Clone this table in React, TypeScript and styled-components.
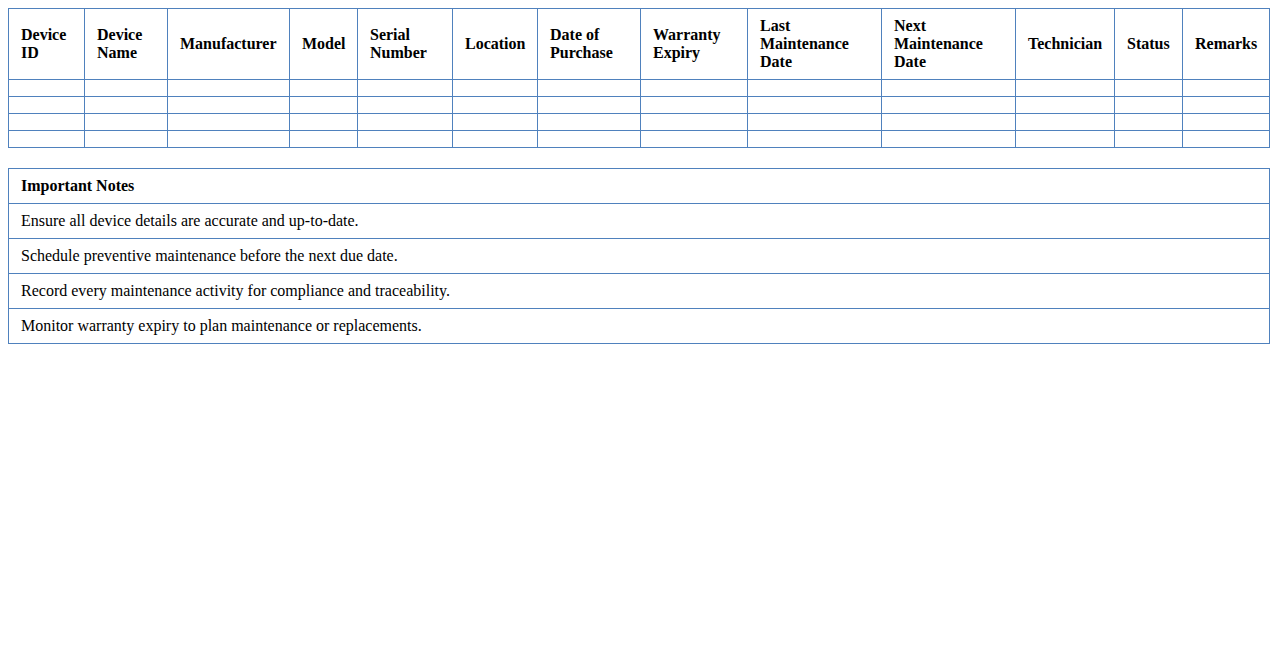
import React from "react";
import styled, { createGlobalStyle } from "styled-components";

const GlobalStyle = createGlobalStyle`
  body {
    margin: 8px;
    font-family: "Liberation Serif", "Times New Roman", serif;
    font-size: 16px;
    color: #000;
    background: #fff;
  }
`;

const Table = styled.table<{ $gap?: number; $fixed?: boolean }>`
  width: 100%;
  border-collapse: collapse;
  table-layout: ${(p) => (p.$fixed ? "fixed" : "auto")};
  margin-bottom: ${(p) => p.$gap ?? 0}px;
`;

const HeadCell = styled.th`
  border: 1px solid #4f81bd;
  padding: 8px 12px;
  text-align: left;
  vertical-align: middle;
  font-weight: bold;
`;

const Cell = styled.td`
  border: 1px solid #4f81bd;
  padding: 8px 12px;
  text-align: left;
`;

const headers = [
  "Device ID",
  "Device Name",
  "Manufacturer",
  "Model",
  "Serial Number",
  "Location",
  "Date of Purchase",
  "Warranty Expiry",
  "Last Maintenance Date",
  "Next Maintenance Date",
  "Technician",
  "Status",
  "Remarks",
];

// last column takes the remaining width
const widths: (number | undefined)[] = [76, 83, 122, 68, 95, 85, 103, 107, 134, 134, 99, 68, undefined];

const notes = [
  "Ensure all device details are accurate and up-to-date.",
  "Schedule preventive maintenance before the next due date.",
  "Record every maintenance activity for compliance and traceability.",
  "Monitor warranty expiry to plan maintenance or replacements.",
];

export default function App() {
  return (
    <>
      <GlobalStyle />
      <Table $gap={20} $fixed>
        <colgroup>
          {widths.map((w, i) => (
            <col key={i} style={w ? { width: w } : undefined} />
          ))}
        </colgroup>
        <thead>
          <tr>
            {headers.map((h) => (
              <HeadCell key={h}>{h}</HeadCell>
            ))}
          </tr>
        </thead>
        <tbody>
          {[0, 1, 2, 3].map((r) => (
            <tr key={r}>
              {headers.map((h) => (
                <Cell key={h}></Cell>
              ))}
            </tr>
          ))}
        </tbody>
      </Table>
      <Table>
        <tbody>
          <tr>
            <HeadCell>Important Notes</HeadCell>
          </tr>
          {notes.map((n) => (
            <tr key={n}>
              <Cell>{n}</Cell>
            </tr>
          ))}
        </tbody>
      </Table>
    </>
  );
}
